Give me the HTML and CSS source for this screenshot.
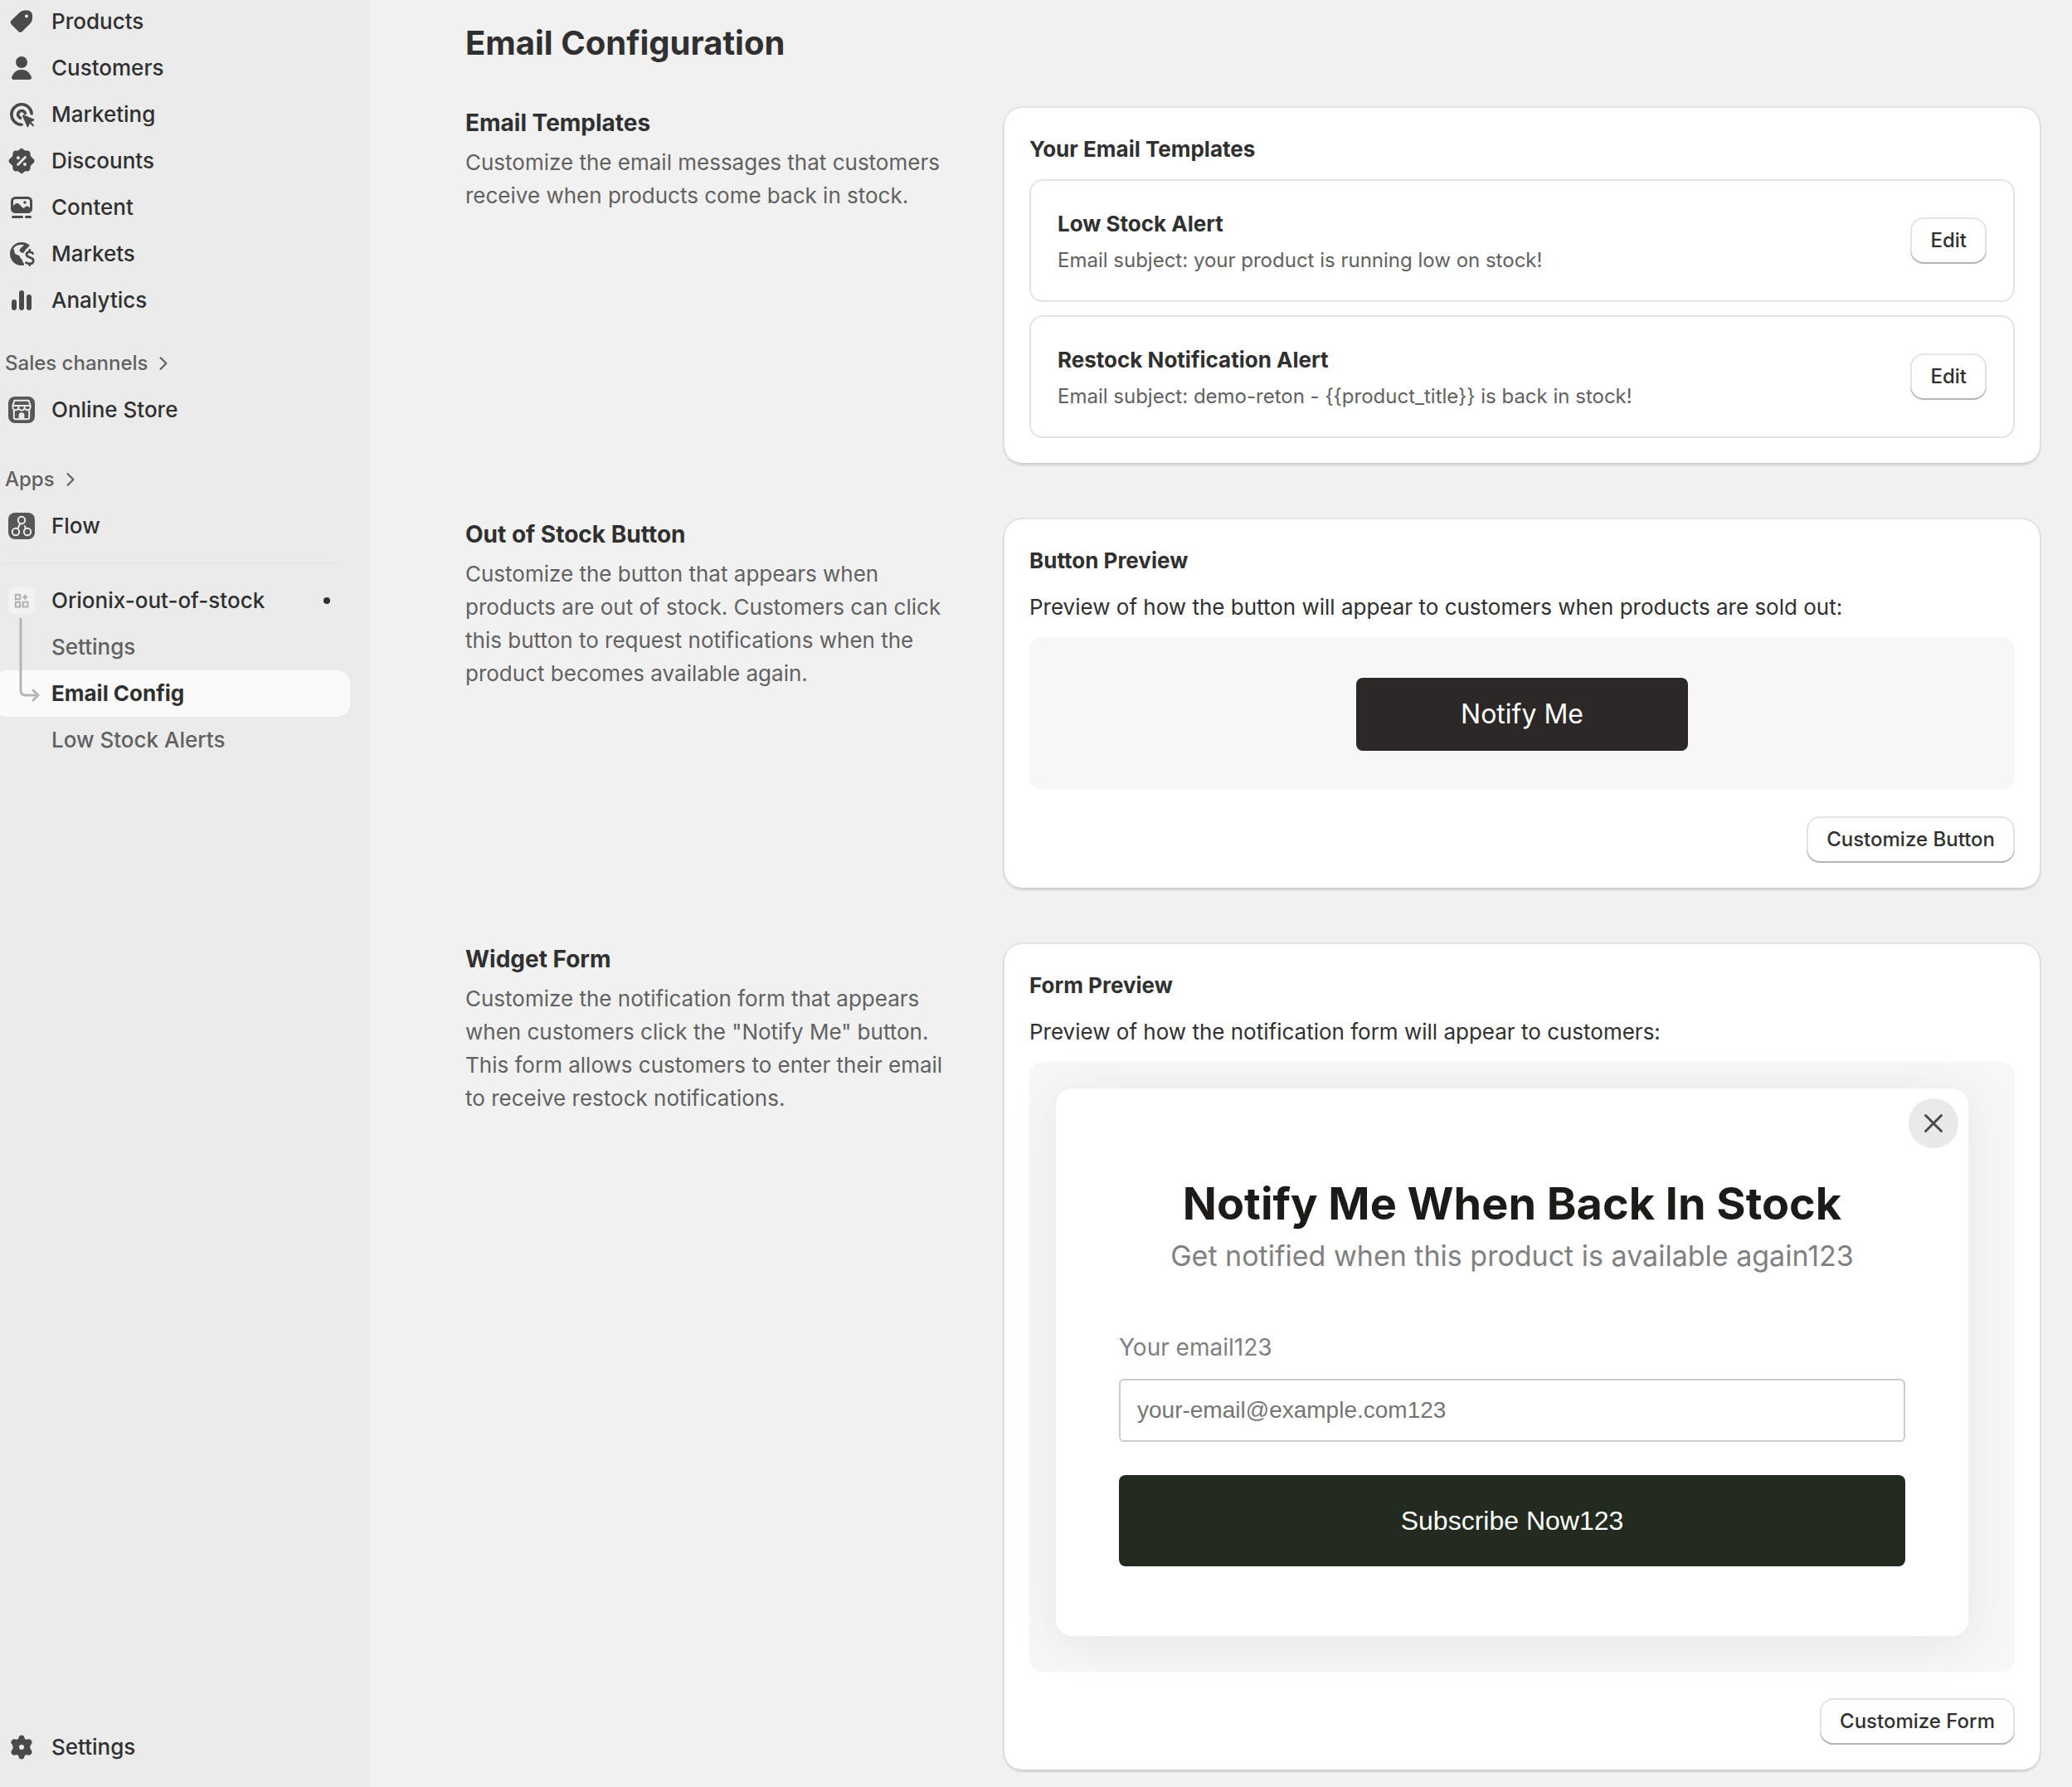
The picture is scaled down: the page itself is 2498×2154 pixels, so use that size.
FILE: index.html
```html
<!DOCTYPE html>
<html lang="en">
<head>
<meta charset="utf-8">
<meta name="viewport" content="width=device-width, initial-scale=1">
<title>Email Configuration</title>
<link rel="stylesheet" href="styles.css">
</head>
<body>
<aside class="sidebar">
  <nav class="nav" aria-label="Main">
    <ul class="nav-list">
      <li><a class="nav-item" href="#"><svg class="icon" viewBox="0 0 20 20" aria-hidden="true"><path fill-rule="evenodd" d="M11 3.4q.6-.15 1.3-.15h1.2a3 3 0 0 1 3 3v1.9q0 1.7-1.1 2.8l-4.9 4.9a1.75 1.75 0 0 1-2.5 0l-4-4a1.9 1.9 0 0 1 0-2.7l5-4.8q.9-.75 2-.95zM13 7.7a1 1 0 1 0 0-2 1 1 0 0 0 0 2z"/></svg>Products</a></li>
      <li><a class="nav-item" href="#"><svg class="icon" viewBox="0 0 20 20" aria-hidden="true"><circle cx="10" cy="6.5" r="3.5"/><path d="M10 11c2.9 0 4.8 1.6 5.9 4.3.4 1-.3 1.7-1.2 1.7H5.3c-.9 0-1.6-.7-1.2-1.7C5.2 12.6 7.100 11 10 11z"/></svg>Customers</a></li>
      <li><a class="nav-item" href="#"><svg class="icon" viewBox="0 0 20 20" aria-hidden="true"><g class="stroke"><path stroke-width="1.8" d="M16.1 9.500A6.1 6.1 0 1 0 10 16.100"/><path stroke-width="1.8" d="M12.200 9.300A2.250 2.250 0 1 0 9.300 12.100"/></g><path d="M11.200 10.300l6.200 2.500c.4.2.4.7 0 .9l-1.700.8 1.700 1.700c.5.5-.3 1.300-.8.800l-1.600-1.600-.9 2c-.2.400-.7.400-.8 0l-2.700-6.400c-.2-.5.100-.8.600-.7z"/></svg>Marketing</a></li>
      <li><a class="nav-item" href="#"><svg class="icon" viewBox="0 0 20 20" aria-hidden="true"><path d="M8.900 3a1.500 1.500 0 0 1 2.200 0c.6.700 1.200.9 2 .8a1.900 1.900 0 0 1 2.200 2.100c-.1.800.2 1.500.9 2l1 .9c.7.700.7 1.700 0 2.400l-1 .9c-.7.500-1 1.200-.9 2a1.900 1.900 0 0 1-2.200 2.100c-.8-.1-1.400.1-2 .8a1.500 1.500 0 0 1-2.200 0c-.6-.7-1.200-.9-2-.8a1.900 1.900 0 0 1-2.200-2.100c.1-.8-.2-1.500-.9-2l-1-.9c-.7-.7-.7-1.700 0-2.400l1-.9c.7-.5 1-1.200.9-2a1.900 1.900 0 0 1 2.200-2.100c.8.100 1.400-.1 2-.8z"/><path class="knock" stroke-width="1.400" d="M7.800 12.200l4.400-4.400"/><circle class="hole" cx="8" cy="8.100" r="1"/><circle class="hole" cx="12" cy="12" r="1"/></svg>Discounts</a></li>
      <li><a class="nav-item" href="#"><svg class="icon" viewBox="0 0 20 20" aria-hidden="true"><path fill-rule="evenodd" d="M6.250 3.500h7.500a2.750 2.750 0 0 1 2.750 2.750v4.500a2.750 2.750 0 0 1-2.750 2.750h-7.500a2.750 2.750 0 0 1-2.750-2.750v-4.500A2.750 2.750 0 0 1 6.250 3.500zM5 9l1.200-1.100c.7-.6 1.600-.6 2.200 0l2.300 2.300c.3.300.7.300 1 0l.4-.4c.7-.7 1.600-.7 2.300 0l.6.500V6.300C15 5.500 14.500 5 13.700 5H6.300C5.500 5 5 5.500 5 6.300zM12 7.900a.9.900 0 1 0 0-1.800.9.900 0 0 0 0 1.800z"/><path class="stroke" stroke-width="1.500" d="M4.750 15.750h5.500M12.750 15.750h2.500"/></svg>Content</a></li>
      <li><a class="nav-item" href="#"><svg class="icon" viewBox="0 0 20 20" aria-hidden="true"><path fill-rule="evenodd" d="M10 3a7 7 0 0 0 0 14c.6 0 1.200-.1 1.600-.2l-.2-1.300c-.6-.1-.9-.7-.9-1.200 0-.6-.2-1-.7-1.300-.9-.6-.7-1.300-1.300-2-.7-.6-1.900-.4-2.500-1.300-.5-.9-.1-2.300-1-2.800.8-1.400 2.300-2.200 4-2.400h2.600L9.300 6.800c-.7.800-.6 1.400 0 2 .7.700 1.700.9 2.200.2l1-1.600 2.500-2.500A7 7 0 0 0 10 3z"/><path class="stroke" stroke-width="1.400" d="M14.900 7.700v1M14.900 15.900v1M16.800 9.800c-.4-.7-1-1-1.900-1-1.100 0-1.900.6-1.900 1.600 0 2.400 4.100 1.200 4.100 3.700 0 1.100-.9 1.800-2.200 1.800-1 0-1.700-.3-2.100-.6"/></svg>Markets</a></li>
      <li><a class="nav-item" href="#"><svg class="icon" viewBox="0 0 20 20" aria-hidden="true"><rect x="4" y="9.500" width="3" height="6.500" rx="1.500"/><rect x="8.500" y="4" width="3" height="12" rx="1.500"/><rect x="13" y="6.500" width="3" height="9.500" rx="1.500"/></svg>Analytics</a></li>
    </ul>

    <a class="nav-heading" href="#">Sales channels<svg class="chevron" viewBox="0 0 16 16" aria-hidden="true"><path d="M5 2l6 6-6 6"/></svg></a>
    <ul class="nav-list">
      <li><a class="nav-item" href="#"><svg class="icon" viewBox="0 0 20 20" aria-hidden="true"><rect class="tile" x="2" y="2" width="16" height="16" rx="4"/><g class="line"><path d="M5.700 4.400h8.600l1 3.100v.8a1.500 1.500 0 0 1-3.500.2 1.800 1.800 0 0 1-3.600 0 1.500 1.500 0 0 1-3.500-.2v-.8zM4.800 7.500h10.400M8.200 7.500v.8M11.800 7.500v.8M5.400 10v4.500q0 1.100 1.100 1.100h7q1.100 0 1.100-1.100V10"/></g><path class="light" d="M8.300 15.500v-2.200a1.700 1.700 0 0 1 3.400 0v2.200z"/></svg>Online Store</a></li>
    </ul>

    <a class="nav-heading nav-heading-apps" href="#">Apps<svg class="chevron" viewBox="0 0 16 16" aria-hidden="true"><path d="M5 2l6 6-6 6"/></svg></a>
    <ul class="nav-list">
      <li><a class="nav-item" href="#"><svg class="icon" viewBox="0 0 20 20" aria-hidden="true"><rect class="tile" x="2" y="2" width="16" height="16" rx="4"/><g class="line"><circle cx="10" cy="6.500" r="2.100"/><circle cx="6.500" cy="13.500" r="2.100"/><circle cx="13.500" cy="13.500" r="2.100"/><path d="M9.200 8.500L7.600 11.600M12.500 11.700l-.6-1.600"/></g></svg>Flow</a></li>
    </ul>

    <hr class="divider">
    <ul class="nav-list">
      <li><a class="nav-item" href="#"><svg class="icon" viewBox="0 0 20 20" aria-hidden="true"><rect class="tile-pale" x="2" y="2" width="16" height="16" rx="3"/><path class="grid-line" d="M6.400 6.400h2.700v2.700H6.400zM6.400 10.900h2.700v2.800H6.400zM10.900 10.900h2.800v2.800h-2.800zM12.100 6.400v3M10.600 7.900h3"/></svg>Orionix-out-of-stock<span class="dot"></span></a>
        <ul class="subnav">
          <li><a class="nav-item sub-item" href="#">Settings</a></li>
          <li><a class="nav-item sub-item active" href="#" aria-current="page">Email Config</a></li>
          <li><a class="nav-item sub-item" href="#">Low Stock Alerts</a></li>
          <li class="branch" aria-hidden="true"><svg viewBox="0 0 28 104"><path d="M3 2v86q0 6 6 6h14M18 88l6 6-6 6"/></svg></li>
        </ul>
      </li>
    </ul>
  </nav>
  <a class="nav-item nav-settings" href="#"><svg class="icon" viewBox="0 0 20 20" aria-hidden="true"><path fill-rule="evenodd" d="M8.400 3.900c.3-1.500 2.900-1.500 3.200 0 .3 1.500.8 1.800 2.200 1.300 1.600-.6 3.300 1.600 2.100 2.900-1.100 1.400-1.100 2.400 0 3.800 1.200 1.300-.5 3.500-2.100 2.900-1.400-.5-1.900-.2-2.200 1.300-.3 1.500-2.900 1.500-3.200 0-.3-1.500-.8-1.800-2.200-1.300-1.600.6-3.300-1.600-2.100-2.900 1.100-1.400 1.100-2.400 0-3.800-1.200-1.300.5-3.500 2.100-2.900 1.400.5 1.900.2 2.200-1.300zM10 11.500a1.500 1.500 0 1 0 0-3 1.500 1.500 0 0 0 0 3z"/></svg>Settings</a>
</aside>

<main class="main">
  <h1 class="page-title">Email Configuration</h1>

  <div class="sections">
    <section class="section">
      <div class="intro">
        <h2>Email Templates</h2>
        <p>Customize the email messages that customers receive when products come back in stock.</p>
      </div>
      <div class="card">
        <h3>Your Email Templates</h3>
        <div class="template">
          <div class="template-text">
            <h4>Low Stock Alert</h4>
            <p>Email subject: your product is running low on stock!</p>
          </div>
          <button class="button" type="button">Edit</button>
        </div>
        <div class="template">
          <div class="template-text">
            <h4>Restock Notification Alert</h4>
            <p>Email subject: demo-reton - {{product_title}} is back in stock!</p>
          </div>
          <button class="button" type="button">Edit</button>
        </div>
      </div>
    </section>

    <section class="section">
      <div class="intro">
        <h2>Out of Stock Button</h2>
        <p>Customize the button that appears when products are out of stock. Customers can click this button to request notifications when the product becomes available again.</p>
      </div>
      <div class="card">
        <h3>Button Preview</h3>
        <p>Preview of how the button will appear to customers when products are sold out:</p>
        <div class="preview preview-button">
          <button class="notify" type="button">Notify Me</button>
        </div>
        <div class="actions"><button class="button" type="button">Customize Button</button></div>
      </div>
    </section>

    <section class="section">
      <div class="intro">
        <h2>Widget Form</h2>
        <p>Customize the notification form that appears when customers click the "Notify Me" button. This form allows customers to enter their email to receive restock notifications.</p>
      </div>
      <div class="card">
        <h3>Form Preview</h3>
        <p>Preview of how the notification form will appear to customers:</p>
        <div class="preview preview-form">
          <form class="modal">
            <button class="close" type="button" aria-label="Close"><svg viewBox="0 0 24 24" aria-hidden="true"><path d="M2.500 2.500l19 19M21.500 2.500l-19 19"/></svg></button>
            <h4 class="modal-title">Notify Me When Back In Stock</h4>
            <p class="modal-subtitle">Get notified when this product is available again123</p>
            <label class="modal-label" for="email">Your email123</label>
            <input class="modal-input" id="email" type="email" placeholder="your-email@example.com123">
            <button class="subscribe" type="button">Subscribe Now123</button>
          </form>
        </div>
        <div class="actions"><button class="button" type="button">Customize Form</button></div>
      </div>
    </section>
  </div>
</main>
</body>
</html>
```

FILE: styles.css
```css
* {
  box-sizing: border-box;
}

body {
  margin: 0;
  display: flex;
  min-height: 100vh;
  background: #f1f1f1;
  color: #303030;
  font-family: Inter, "Liberation Sans", sans-serif;
  font-size: 26px;
  line-height: 40px;
}

h1, h2, h3, h4, p, ul {
  margin: 0;
  padding: 0;
}

ul {
  list-style: none;
}

button, input {
  font: inherit;
}

/* Sidebar */
.sidebar {
  flex: 0 0 446px;
  display: flex;
  flex-direction: column;
  justify-content: space-between;
  padding: 0 24px 20px 0;
  background: #ebebeb;
  overflow: hidden;
}

.nav {
  margin-top: -2px;
}

.nav-item {
  display: flex;
  align-items: center;
  gap: 16px;
  height: 56px;
  margin-left: -8px;
  padding: 0 24px 0 14px;
  border-radius: 16px;
  color: #303030;
  font-weight: 550;
  text-decoration: none;
}

.icon {
  flex: none;
  width: 40px;
  height: 40px;
  fill: #4a4a4a;
}

.icon .stroke {
  fill: none;
  stroke: #4a4a4a;
  stroke-linecap: round;
}

.icon .knock {
  fill: none;
  stroke: #ebebeb;
  stroke-linecap: round;
}

.icon .hole {
  fill: #ebebeb;
}

.icon .tile {
  fill: #575757;
}

.icon .line {
  fill: none;
  stroke: #ebebeb;
  stroke-width: 1;
  stroke-linecap: round;
  stroke-linejoin: round;
}

.icon .light {
  fill: #ebebeb;
}

.icon .tile-pale {
  fill: #f2f2f2;
}

.icon .grid-line {
  fill: none;
  stroke: #b0b0b0;
  stroke-width: 1;
}

.nav-heading {
  display: flex;
  align-items: center;
  gap: 10px;
  height: 56px;
  margin-top: 20px;
  padding-left: 6px;
  color: #616161;
  font-size: 24px;
  font-weight: 550;
  text-decoration: none;
}

.nav-heading-apps {
  margin-top: 28px;
}

.chevron {
  width: 18px;
  height: 18px;
  fill: none;
  stroke: #616161;
  stroke-width: 2;
  stroke-linecap: round;
  stroke-linejoin: round;
}

.divider {
  height: 2px;
  margin: 16px 16px 16px 6px;
  border: 0;
  background: #e3e3e3;
}

.dot {
  width: 8px;
  height: 8px;
  margin-left: auto;
  border-radius: 50%;
  background: #303030;
}

.subnav {
  position: relative;
}

.sub-item {
  padding-left: 70px;
  color: #616161;
  font-weight: 450;
}

.sub-item.active {
  background: #fafafa;
  color: #303030;
  font-weight: 650;
}

.branch {
  position: absolute;
  top: -8px;
  left: 22px;
}

.branch svg {
  display: block;
  width: 28px;
  height: 104px;
  fill: none;
  stroke: #b5b5b5;
  stroke-width: 3;
  stroke-linecap: round;
  stroke-linejoin: round;
}

/* Main column */
.main {
  flex: 1;
  min-width: 0;
  padding: 28px 37px 19px 115px;
}

.page-title {
  font-size: 40px;
  font-weight: 650;
  line-height: 48px;
}

.sections {
  display: grid;
  gap: 64px;
  margin-top: 52px;
}

.section {
  display: grid;
  grid-template-columns: 600px minmax(0, 1fr);
  gap: 48px;
}

.intro h2 {
  margin-bottom: 8px;
  font-size: 28px;
  font-weight: 650;
}

.intro p {
  color: #616161;
}

.card {
  display: flex;
  flex-direction: column;
  gap: 16px;
  padding: 32px;
  border-radius: 24px;
  background: #fff;
  box-shadow: inset 0 2px #e3e3e3, inset 2px 0 #dedede, inset -2px 0 #dedede, inset 0 -2px #cfcfcf, 0 2px #dfdfdf;
}

.card h3, .card h4 {
  font-size: 26px;
  font-weight: 650;
}

.template {
  display: flex;
  align-items: center;
  justify-content: space-between;
  gap: 32px;
  padding: 32px;
  border: 2px solid #e3e3e3;
  border-radius: 16px;
}

.template-text {
  display: grid;
  gap: 8px;
}

.template-text p {
  color: #616161;
  font-size: 24px;
  line-height: 32px;
}

.button {
  height: 56px;
  padding: 0 24px;
  border: 0;
  border-radius: 16px;
  background: #fff;
  box-shadow: inset 0 -2px #b5b5b5, inset 0 0 0 2px #e3e3e3;
  color: #303030;
  font-size: 24px;
  font-weight: 550;
  line-height: 32px;
}

.actions {
  display: flex;
  justify-content: flex-end;
  margin-top: 16px;
}

.preview {
  border-radius: 16px;
  background: #f7f7f7;
}

.preview-button {
  display: flex;
  justify-content: center;
  padding: 49px 48px 47px;
}

.notify {
  width: 400px;
  height: 88px;
  border: 0;
  border-radius: 8px;
  background: #2c2828;
  color: #fff;
  font-size: 32px;
}

.preview-form {
  padding: 32px 32px 43px;
}

.modal {
  position: relative;
  display: flex;
  flex-direction: column;
  max-width: 1100px;
  padding: 104px 76px 84px;
  border-radius: 20px;
  background: #fff;
  box-shadow: 0 8px 64px rgba(0, 0, 0, 0.08);
}

.close {
  position: absolute;
  top: 12px;
  right: 12px;
  display: grid;
  place-items: center;
  width: 60px;
  height: 60px;
  padding: 0;
  border: 0;
  border-radius: 50%;
  background: #e9e9e9;
}

.close svg {
  width: 24px;
  height: 24px;
  fill: none;
  stroke: #4a4a4a;
  stroke-width: 3;
  stroke-linecap: round;
}

.modal .modal-title {
  color: #1c1b19;
  font-size: 54px;
  font-weight: 700;
  line-height: 70px;
  text-align: center;
}

.modal-subtitle {
  color: #808080;
  font-size: 34px;
  line-height: 56px;
  text-align: center;
}

.modal-label {
  margin-top: 62px;
  color: #808080;
  font-size: 28px;
}

.modal-input {
  height: 76px;
  margin-top: 18px;
  padding: 0 20px;
  border: 2px solid #ccc;
  border-radius: 6px;
  background: #fff;
  font-family: "Liberation Sans", Arial, sans-serif;
  font-size: 28px;
}

.modal-input::placeholder {
  color: #757575;
  opacity: 1;
}

.subscribe {
  height: 110px;
  margin-top: 40px;
  border: 0;
  border-radius: 8px;
  background: #232b20;
  color: #fff;
  font-family: "Liberation Sans", Arial, sans-serif;
  font-size: 32px;
}
```
